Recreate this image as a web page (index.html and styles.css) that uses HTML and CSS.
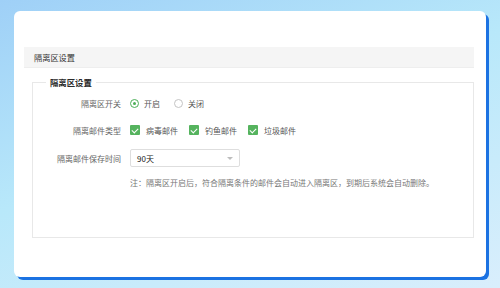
FILE: index.html
```html
<!DOCTYPE html>
<html lang="zh-CN">
<head>
  <meta charset="UTF-8">
  <meta name="viewport" content="width=device-width, initial-scale=1">
  <title>隔离区设置</title>
  <link rel="stylesheet" href="styles.css">
</head>
<body>
  <div class="card">
    <div class="section-title">隔离区设置</div>

    <fieldset class="group">
      <legend>隔离区设置</legend>

      <div class="form">
        <div class="row">
          <label class="label">隔离区开关</label>
          <div class="controls radios">
            <span class="option"><i class="radio checked"></i>开启</span>
            <span class="option"><i class="radio"></i>关闭</span>
          </div>
        </div>

        <div class="row">
          <label class="label">隔离邮件类型</label>
          <div class="controls">
            <span class="option"><i class="check"></i>病毒邮件</span>
            <span class="option"><i class="check"></i>钓鱼邮件</span>
            <span class="option"><i class="check"></i>垃圾邮件</span>
          </div>
        </div>

        <div class="row select-row">
          <label class="label">隔离邮件保存时间</label>
          <div class="controls">
            <div class="select">
              <span>90天</span>
              <i class="arrow"></i>
            </div>
          </div>
        </div>

        <div class="row note-row">
          <span></span>
          <p class="note">注：隔离区开启后，符合隔离条件的邮件会自动进入隔离区，到期后系统会自动删除。</p>
        </div>
      </div>
    </fieldset>
  </div>
</body>
</html>
```

FILE: styles.css
```css
* {
  box-sizing: border-box;
}

html, body {
  height: 100%;
}

body {
  margin: 0;
  padding: 11px 14px 0;
  font-family: "Noto Sans CJK SC", "Noto Sans", sans-serif;
  font-size: 8px;
  color: #555;
  background: linear-gradient(160deg, #9fd0f7 0%, #b8e8fa 45%, #d9eefc 100%);
}

.card {
  width: 472px;
  height: 266px;
  background: #fff;
  border-radius: 6px;
  padding: 36px 12px 0 10px;
  box-shadow: 3px 3px 0 #1b72e2;
}

.section-title {
  background: #f5f5f5;
  height: 21px;
  line-height: 21px;
  padding-left: 10px;
  color: #333;
  font-size: 8.2px;
  border-bottom: 1px solid #eeeeee;
}

.group {
  margin: 8px 0 0 8px;
  padding: 0;
  min-width: 0;
  height: 162px;
  border: 1px solid #e8e8e8;
}

.group legend {
  margin-left: 13px;
  padding: 0 4px;
  font-size: 8.4px;
  font-weight: bold;
  color: #2a2a2a;
}

.form {
  padding-top: 6px;
  display: flex;
  flex-direction: column;
  gap: 9px;
}

.row {
  display: grid;
  grid-template-columns: 88px 1fr;
  column-gap: 9px;
  align-items: center;
  height: 18px;
}

.label {
  text-align: right;
  color: #666;
}

.controls {
  display: flex;
  align-items: center;
  gap: 11px;
}

.controls.radios {
  gap: 14px;
}

.option {
  display: flex;
  align-items: center;
  gap: 6px;
  color: #555;
}

.radios .option {
  gap: 5px;
}

.radio {
  width: 9px;
  height: 9px;
  border-radius: 50%;
  border: 1px solid #c4c4c4;
  display: flex;
  align-items: center;
  justify-content: center;
}

.radio.checked {
  border-color: #4caf58;
}

.radio.checked::after {
  content: "";
  width: 3px;
  height: 3px;
  border-radius: 50%;
  background: #4caf58;
}

.check {
  width: 10px;
  height: 10px;
  border-radius: 1px;
  background: #55b35e;
  position: relative;
}

.check::after {
  content: "";
  position: absolute;
  left: 3px;
  top: 1.5px;
  width: 3px;
  height: 5px;
  border: solid #fff;
  border-width: 0 1px 1px 0;
  transform: rotate(45deg);
}

.select-row {
  margin-top: 1px;
}

.select {
  width: 110px;
  height: 18px;
  border: 1px solid #dedede;
  border-radius: 2px;
  display: flex;
  align-items: center;
  justify-content: space-between;
  padding: 0 6px 0 6px;
  color: #222;
}

.arrow {
  width: 0;
  height: 0;
  border-left: 3.5px solid transparent;
  border-right: 3.5px solid transparent;
  border-top: 3.5px solid #bdbdbd;
}

.note-row {
  margin-top: -3px;
}

.note {
  margin: 0;
  color: #777;
  white-space: nowrap;
}
```
